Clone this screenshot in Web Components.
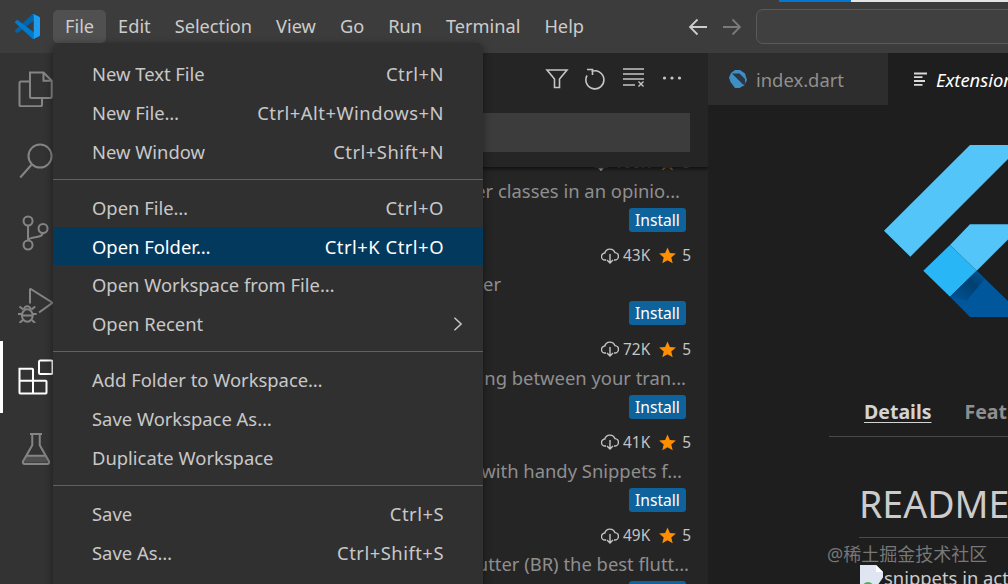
<!DOCTYPE html>
<html>
<head>
<meta charset="utf-8">
<title>Open Folder</title>
<style>
  html, body { margin: 0; height: 100%; background: #1e1e1e; overflow: hidden; }
  body { font-family: "Noto Sans", "Noto Sans CJK SC", sans-serif; }
</style>
</head>
<body>
<vs-window>
  <vs-titlebar slot="title"></vs-titlebar>
  <vs-activity slot="activity"></vs-activity>
  <vs-sidebar slot="sidebar">
    <ext-row dl="106K" desc="Helper classes in an opinio..." end="28"></ext-row>
    <ext-row dl="43K" desc="Flutter tester" end="207"></ext-row>
    <ext-row dl="72K" desc="Switching between your tran..." end="22"></ext-row>
    <ext-row dl="41K" desc="Flutter with handy Snippets f..." end="26"></ext-row>
    <ext-row dl="49K" desc="Flutter (BR) the best flutt..." end="19"></ext-row>
  </vs-sidebar>
  <vs-editor slot="editor"></vs-editor>
  <vs-menu slot="menu">
    <vs-item label="New Text File" keys="Ctrl+N"></vs-item>
    <vs-item label="New File…" keys="Ctrl+Alt+Windows+N"></vs-item>
    <vs-item label="New Window" keys="Ctrl+Shift+N"></vs-item>
    <vs-sep></vs-sep>
    <vs-item label="Open File…" keys="Ctrl+O"></vs-item>
    <vs-item label="Open Folder…" keys="Ctrl+K Ctrl+O" active></vs-item>
    <vs-item label="Open Workspace from File…"></vs-item>
    <vs-item label="Open Recent" submenu></vs-item>
    <vs-sep></vs-sep>
    <vs-item label="Add Folder to Workspace…"></vs-item>
    <vs-item label="Save Workspace As…"></vs-item>
    <vs-item label="Duplicate Workspace"></vs-item>
    <vs-sep></vs-sep>
    <vs-item label="Save" keys="Ctrl+S"></vs-item>
    <vs-item label="Save As…" keys="Ctrl+Shift+S"></vs-item>
  </vs-menu>
</vs-window>

<script>
const UI_FONT = '"Noto Sans", "Noto Sans CJK SC", sans-serif';

class VsWindow extends HTMLElement {
  constructor() {
    super();
    this.attachShadow({ mode: "open" }).innerHTML = `
    <style>
      :host {
        display: grid;
        grid-template-columns: 72px 636px 1fr;
        grid-template-rows: 53px 531px;
        position: relative;
        width: 1008px;
        height: 584px;
        overflow: hidden;
        font-family: ${UI_FONT};
      }
      .title { grid-column: 1 / 4; }
      .menu { position: absolute; left: 53px; top: 43px; z-index: 5; display: block; }
      .progress { position: absolute; left: 779px; top: 0; width: 229px; height: 2px; display: flex; z-index: 6; }
      .progress i { width: 72px; background: #0078d4; }
      .progress b { flex: 1; background: #e4e4e4; }
      .mark {
        position: absolute; left: 827px; top: 542px; z-index: 6;
        font-size: 18px; line-height: 24px; color: rgba(150, 150, 150, .75); white-space: nowrap;
      }
    </style>
    <div class="title"><slot name="title"></slot></div>
    <slot name="activity"></slot>
    <slot name="sidebar"></slot>
    <slot name="editor"></slot>
    <div class="progress"><i></i><b></b></div>
    <div class="menu"><slot name="menu"></slot></div>
    <div class="mark">@稀土掘金技术社区</div>
  `;
  }
}

class VsTitlebar extends HTMLElement {
  constructor() {
    super();
    const names = ["File", "Edit", "Selection", "View", "Go", "Run", "Terminal", "Help"];
    this.attachShadow({ mode: "open" }).innerHTML = `
    <style>
      :host {
        display: flex;
        align-items: center;
        height: 53px;
        background: #3c3c3c;
        color: #cccccc;
        font-size: 18.2px;
      }
      .logo { width: 53px; display: flex; justify-content: center; flex: none; }
      .logo svg { width: 25px; height: 25px; margin-left: 1px; }
      .items { display: flex; align-items: center; width: 622px; flex: none; }
      .items span { padding: 0 12px; height: 33px; line-height: 33px; border-radius: 5px; white-space: nowrap; }
      .items span:first-child { background: #505050; }
      .nav { display: flex; gap: 14px; width: 68px; margin-left: 13px; flex: none; }
      .nav svg { width: 20px; height: 20px; fill: none; stroke: #cccccc; stroke-width: 1.8; }
      .nav svg + svg { stroke: #7a7a7a; }
      .cmd {
        width: 300px; height: 35px; margin-top: -1px; flex: none;
        box-sizing: border-box;
        border: 1px solid #5a5a5a; border-radius: 7px; background: #404040;
      }
    </style>
    <div class="logo">
      <svg viewBox="0 0 100 100">
        <path fill="#0065A9" d="M96.46 10.8 75.86.88C73.47-.27 70.62.21 68.75 2.08L1.3 63.58c-1.81 1.66-1.81 4.51 0 6.16l5.51 5.01c1.49 1.35 3.72 1.45 5.32.24L93.36 13.37C96.09 11.3 100 13.25 100 16.67v-.24c0-2.4-1.38-4.59-3.54-5.63Z"/>
        <path fill="#007ACC" d="M96.46 89.2 75.86 99.12c-2.39 1.15-5.24.67-7.11-1.2L1.3 36.42c-1.81-1.66-1.81-4.51 0-6.16l5.51-5.01c1.49-1.35 3.72-1.45 5.32-.24l81.23 61.62c2.73 2.07 6.64.12 6.64-3.3v.24c0 2.4-1.38 4.59-3.54 5.63Z"/>
        <path fill="#1F9CF0" d="M75.86 99.13c-2.39 1.14-5.24.66-7.11-1.21 2.31 2.3 6.25.67 6.25-2.59V4.67c0-3.26-3.94-4.89-6.25-2.59C70.62.21 73.47-.27 75.86.87l20.6 9.91c2.16 1.04 3.54 3.23 3.54 5.63v67.18c0 2.4-1.38 4.59-3.54 5.63l-20.6 9.91Z"/>
      </svg>
    </div>
    <div class="items">${names.map(n => `<span>${n}</span>`).join("")}</div>
    <div class="nav">
      <svg viewBox="0 0 20 20"><path d="M19 10H2M9.5 2.5 2 10l7.5 7.5"/></svg>
      <svg viewBox="0 0 20 20"><path d="M1 10h17M10.5 2.5 18 10l-7.5 7.5"/></svg>
    </div>
    <div class="cmd"></div>
  `;
  }
}

const ACTIVITY_ICONS = [
  `<path d="M8 1h9l5.5 5.5V17a1 1 0 0 1-1 1H9a1 1 0 0 1-1-1z"/><path d="M17 1v5.5h5.5"/><path d="M8 7H2a1 1 0 0 0-1 1v14.5a1 1 0 0 0 1 1h13a1 1 0 0 0 1-1V18"/>`,
  `<circle cx="14.7" cy="8.7" r="7.7"/><path d="M9 14.5 1.5 23"/>`,
  `<circle cx="6.7" cy="4" r="3"/><circle cx="16.7" cy="9" r="3"/><circle cx="6.7" cy="20" r="3"/><path d="M6.7 7v10M16.5 12c0 1.8-1.5 2.2-4 2.6-2.5.4-5.8.6-5.8 2.4"/>`,
  `<path d="M8 1 23 10.5 14 17M8 1v10"/><ellipse cx="6.2" cy="19" rx="3.6" ry="4.2"/><path d="M2.6 19h7.2M3.5 15 1 13M9 15l2.5-2M2.6 18H0M9.8 18h2.6M3.2 22 1 24M9.2 22l2.2 2M4 15a2.2 2.2 0 0 1 4.4 0"/>`,
  `<path d="M1 6.5h8.5a.5.5 0 0 1 .5.5v7.5H1zM1 14.5h9v8.5H1.5a.5.5 0 0 1-.5-.5zM10 14.5h8.5a.5.5 0 0 1 .5.5v7.5a.5.5 0 0 1-.5.5H10z"/><rect x="14" y="1" width="9" height="9" rx=".8"/>`,
  `<path d="M8 2h8M9.5 2v7.5L3.4 20.2A1.2 1.2 0 0 0 4.5 22h15a1.2 1.2 0 0 0 1.1-1.8L14.5 9.5V2"/><path d="M5.5 16.8h13L20 21H4z" fill="#858585" fill-opacity=".35" stroke="none"/><path d="M6 16.5h12"/>`,
];

class VsActivity extends HTMLElement {
  constructor() {
    super();
    this.attachShadow({ mode: "open" }).innerHTML = `
    <style>
      :host { display: flex; flex-direction: column; background: #333333; }
      div { height: 72px; display: flex; align-items: center; justify-content: center; box-sizing: border-box; flex: none; }
      svg { width: 36px; height: 36px; fill: none; stroke: #858585; stroke-width: 1.35; }
      .on { box-shadow: inset 3px 0 0 #ffffff; }
      .on svg { stroke: #ffffff; }
    </style>
    ${ACTIVITY_ICONS.map((icon, i) => `<div class="${i === 4 ? "on" : ""}"><svg viewBox="0 0 24 24">${icon}</svg></div>`).join("")}
  `;
  }
}

class VsSidebar extends HTMLElement {
  constructor() {
    super();
    this.attachShadow({ mode: "open" }).innerHTML = `
    <style>
      :host { display: block; background: #252526; overflow: hidden; }
      header {
        position: relative; z-index: 1;
        height: 114px; box-sizing: border-box;
        background: #252526;
        box-shadow: 0 2px 3px #111111;
        padding-top: 13px;
      }
      .actions { display: flex; justify-content: flex-end; gap: 14.5px; padding-right: 24px; height: 24px; }
      .actions svg { width: 24px; height: 24px; fill: none; stroke: #c5c5c5; stroke-width: 1.6; }
      .search { height: 39px; margin: 23px 18px 0 0; background: #3c3c3c; }
      .list { margin-top: -18px; }
    </style>
    <header>
      <div class="actions">
        <svg viewBox="0 0 24 24"><path d="M2 4h20l-7.5 9v8.5h-5V13z"/></svg>
        <svg viewBox="0 0 24 24"><path d="M8.5 5.5A9 9 0 1 1 4 9.5M4 3.5h5.5V9"/></svg>
        <svg viewBox="0 0 24 24" style="stroke-width:1.4"><path d="M1 3h21M1 8h21M1 13h21M1 19h12M16.5 15.5l5 5M21.5 15.5l-5 5"/></svg>
        <svg viewBox="0 0 24 24" style="stroke:none;fill:#c5c5c5"><circle cx="4.5" cy="12" r="1.6"/><circle cx="12" cy="12" r="1.6"/><circle cx="19.5" cy="12" r="1.6"/></svg>
      </div>
      <div class="search"></div>
    </header>
    <div class="list"><slot></slot></div>
  `;
  }
}

class ExtRow extends HTMLElement {
  connectedCallback() {
    const dl = this.getAttribute("dl");
    const desc = this.getAttribute("desc");
    const end = this.getAttribute("end");
    this.attachShadow({ mode: "open" }).innerHTML = `
    <style>
      :host {
        display: flex; flex-direction: column; align-items: flex-end;
        height: 93.3px; overflow: hidden;
        padding-right: 17px;
      }
      .stats {
        height: 27px; flex: none; display: flex; align-items: center;
        font-size: 15.4px; color: #c4c4c4;
      }
      .stats svg.cloud { width: 18px; height: 18px; fill: none; stroke: #c5c5c5; stroke-width: 1.4; margin-right: 4px; }
      .stats svg.star { width: 17px; height: 17px; fill: #ff8e00; margin: 0 6px 0 9px; }
      .desc {
        height: 29px; line-height: 29px; white-space: nowrap; flex: none;
        font-size: 18.4px; color: #8f8f8f;
        margin-right: ${end - 17}px;
      }
      button {
        all: unset; box-sizing: border-box; flex: none;
        margin: 3px 5px 0 0;
        width: 57px; height: 24px; line-height: 24px; text-align: center;
        background: #0e639c; border-radius: 3px;
        color: #ffffff; font-size: 15.6px;
      }
    </style>
    <div class="stats">
      <svg class="cloud" viewBox="0 0 18 18"><path d="M5 13H4.2a3.5 3.5 0 0 1-.4-7A5.3 5.3 0 0 1 13.9 5.6 3.7 3.7 0 0 1 13.6 13H13M9 7v9M6 13l3 3 3-3"/></svg>
      <span>${dl}</span>
      <svg class="star" viewBox="0 0 18 18"><path d="M9 .5l2.5 5.9 6.4.5-4.9 4.2 1.5 6.2L9 14l-5.500 3.300L5 11.100.1 6.900l6.400-.5z"/></svg>
      <span>5</span>
    </div>
    <div class="desc">${desc}</div>
    <button>Install</button>
  `;
  }
}

class VsEditor extends HTMLElement {
  constructor() {
    super();
    this.attachShadow({ mode: "open" }).innerHTML = `
    <style>
      :host { display: block; background: #1e1e1e; overflow: hidden; color: #cccccc; }
      .tabs { display: flex; height: 52px; background: #252526; font-size: 18.4px; white-space: nowrap; }
      .tab { display: flex; align-items: center; flex: none; box-sizing: border-box; }
      .one { width: 180px; background: #2d2d2d; color: #8f8f8f; padding-left: 21px; gap: 9px; }
      .one svg { width: 18px; height: 18px; }
      .two { flex: 1; background: #1e1e1e; color: #ffffff; font-style: italic; padding-left: 26px; gap: 9px; }
      .two svg { width: 13px; height: 14px; fill: none; stroke: #d8d8d8; stroke-width: 1.8; }
      .logo { display: block; width: 124px; height: 172px; margin: 40px 0 0 176px; }
      nav { display: flex; gap: 33px; margin: 81px 0 0 121px; padding: 0 0 10px 35px; border-bottom: 1px solid #4a4a4a; font-size: 19.5px; font-weight: 700; line-height: 28px; white-space: nowrap; }
      nav u { color: #d4d4d4; text-underline-offset: 3px; }
      nav span { color: #8f8f8f; }
      h1 { margin: 43px 0 0 151px; padding-bottom: 9px; border-bottom: 1px solid #4a4a4a; font-size: 37.5px; font-weight: 400; line-height: 48px; color: #cccccc; white-space: nowrap; }
      .broken { display: flex; align-items: flex-start; margin: 27px 0 0 151px; font-size: 18.4px; line-height: 26px; white-space: nowrap; color: #cccccc; }
      .broken svg { width: 25px; height: 30px; flex: none; }
    </style>
    <div class="tabs">
      <div class="tab one">
        <svg viewBox="0 0 18 18"><path fill="#3f8ec4" d="M6 0h5l5 3.5 2 6.5-3 5.5-4.5 2.5H6L1.5 12 0 7.5 2 3z"/><path fill="#2b3844" d="M3 3.5h7.5l5.5 5.5v5.500h-2z"/></svg>
        <span>index.dart</span>
      </div>
      <div class="tab two">
        <svg viewBox="0 0 13 14"><path d="M0 1.5h13M0 5.2h8.5M0 9h11M0 12.800h8.500"/></svg>
        <span>Extension: Flutter</span>
      </div>
    </div>
    <svg class="logo" viewBox="884 145 124 172">
      <defs>
        <linearGradient id="fold" x1="0" y1="1" x2="1" y2="0">
          <stop offset="0" stop-color="#01579b"/><stop offset=".6" stop-color="#013f70"/><stop offset="1" stop-color="#01579b"/>
        </linearGradient>
      </defs>
      <path fill="#54c5f8" d="M970 145h38v14l-97.700 97.700L884 230.700z"/>
      <path fill="#54c5f8" d="M970 224.300h38v15.200l-31.300 31.200L950 245z"/>
      <path fill="#29b6f6" d="M950 245l26.700 25.700L950 296.700l-26.700-26z"/>
      <path fill="#01579b" d="M950 296.700l26.700-26 31.300 30.300V317h-38z"/>
      <path fill="url(#fold)" d="M950 296.700l26.700-26 8 8-18 22z"/>
    </svg>
    <nav><u>Details</u><span>Feature Contributions</span></nav>
    <h1>README</h1>
    <div class="broken">
      <svg viewBox="0 0 25 30"><path fill="#dfe6f2" d="M1 0h16l7 7v23H1z"/><path fill="#fff" d="M17 0v7h7z"/><circle cx="9" cy="23" r="6" fill="#4caf50"/><path fill="#1e1e1e" d="M25 11v19H12z"/></svg>
      <span>snippets in action</span>
    </div>
  `;
  }
}

class VsMenu extends HTMLElement {
  constructor() {
    super();
    this.attachShadow({ mode: "open" }).innerHTML = `
    <style>
      :host {
        display: block;
        width: 430px; height: 560px;
        box-sizing: border-box;
        padding-top: 11px;
        background: #303031;
        box-shadow: 0 2px 8px rgba(0, 0, 0, .45);
        border-radius: 7px 7px 0 0;
      }
    </style>
    <slot></slot>
  `;
  }
}

class VsItem extends HTMLElement {
  connectedCallback() {
    const keys = this.getAttribute("keys") || "";
    const chevron = this.hasAttribute("submenu")
      ? `<svg viewBox="0 0 12 18"><path d="M2 2l7.5 7L2 16"/></svg>` : "";
    this.attachShadow({ mode: "open" }).innerHTML = `
    <style>
      :host {
        display: flex; align-items: center; justify-content: space-between;
        position: relative;
        height: 38.9px; padding: 0 39px; white-space: nowrap;
        font-size: 18.4px; color: #c8c8c8;
      }
      :host([active]) { background: #04395e; color: #ffffff; }
      .keys { letter-spacing: .5px; }
      svg { position: absolute; right: 19px; top: 12px; width: 12px; height: 16px; fill: none; stroke: #c8c8c8; stroke-width: 1.7; }
    </style>
    <span>${this.getAttribute("label")}</span><span class="keys">${keys}</span>${chevron}
  `;
  }
}

class VsSep extends HTMLElement {
  constructor() {
    super();
    this.attachShadow({ mode: "open" }).innerHTML = `
    <style>
      :host { display: block; height: 1px; margin: 8px 0; background: #606060; }
    </style>
  `;
  }
}

customElements.define("vs-window", VsWindow);
customElements.define("vs-titlebar", VsTitlebar);
customElements.define("vs-activity", VsActivity);
customElements.define("vs-sidebar", VsSidebar);
customElements.define("ext-row", ExtRow);
customElements.define("vs-editor", VsEditor);
customElements.define("vs-menu", VsMenu);
customElements.define("vs-item", VsItem);
customElements.define("vs-sep", VsSep);
</script>
</body>
</html>
